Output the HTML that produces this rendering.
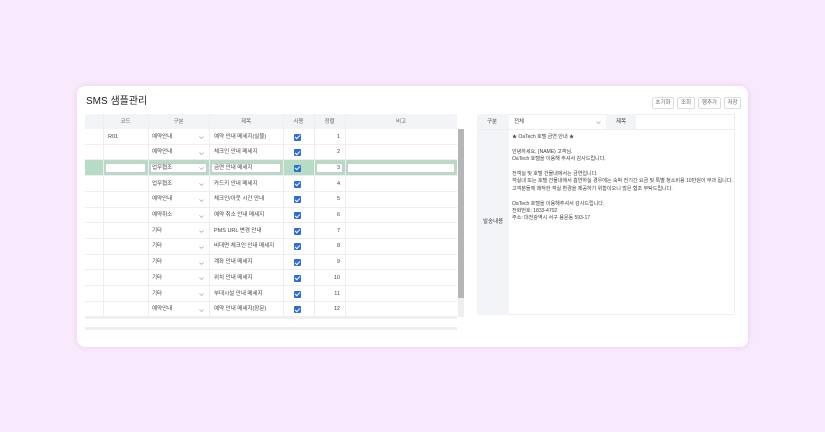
<!DOCTYPE html>
<html><head><meta charset="utf-8"><style>
*{box-sizing:border-box;margin:0;padding:0}
body{width:825px;height:432px;background:#f8eafc;font-family:"Liberation Sans","Noto Sans CJK KR",sans-serif;color:#333;position:relative;overflow:hidden}
.card{position:absolute;left:77px;top:86px;width:671px;height:261px;background:#fff;border-radius:8px;box-shadow:0 0 6px rgba(200,150,220,.35)}
.title{position:absolute;left:86px;top:96px;font-size:10px;line-height:12px;color:#222}
.btn{position:absolute;top:97px;height:12px;border:1px solid #ddd;border-radius:2px;font-size:5.5px;color:#666;line-height:10px;text-align:center;background:#fff}
.abs{position:absolute}
.t{font-size:5.5px;line-height:7px;color:#444;white-space:nowrap}
.hd{background:#f3f4f8}
.chk{position:absolute;width:7px;height:7px;background:#2b6fd6;border-radius:1px}
.chk:after{content:"";position:absolute;left:2px;top:0.5px;width:2px;height:4px;border:solid #fff;border-width:0 1px 1px 0;transform:rotate(45deg)}
.in{position:absolute;background:#fff;border:1px solid #ccc;border-radius:2px;height:10px}
.cv{position:absolute;width:5px;height:3px}
</style></head><body>
<div class="card"></div>
<div class="title">SMS 샘플관리</div>
<div class="btn" style="left:652px;width:22px">초기화</div>
<div class="btn" style="left:677px;width:18px">조회</div>
<div class="btn" style="left:698px;width:23px">행추가</div>
<div class="btn" style="left:724px;width:17px">저장</div>

<div id="grid"></div>
<div class="abs" style="left:458px;top:129px;width:6px;height:188px;background:#eee"></div>
<div class="abs" style="left:458px;top:129px;width:6px;height:169px;background:#b5b5b8"></div>
<div class="abs" style="left:85px;top:327px;width:372px;height:3px;background:#eee"></div>

<div class="abs" style="left:477px;top:114px;width:258px;height:201px;border:1px solid #eceef3"></div>
<div class="abs hd" style="left:477px;top:114px;width:32px;height:201px"></div>
<div class="abs hd" style="left:606px;top:114px;width:30px;height:15px"></div>
<div class="abs" style="left:477px;top:129px;width:258px;height:1px;background:#eceef3"></div>
<div class="abs t" style="left:487px;top:118.5px">구분</div>
<div class="abs t" style="left:514px;top:118.5px">전체</div>
<svg class="cv" style="left:596px;top:121px" viewBox="0 0 5 3"><path d="M0.5 0.5L2.5 2.5L4.5 0.5" fill="none" stroke="#999" stroke-width="0.6"/></svg>
<div class="abs t" style="left:616px;top:118.5px">제목</div>
<div class="abs t" style="left:483px;top:219px">발송내용</div>
<div class="abs t" style="left:512px;top:134px;line-height:7.4px;font-size:5.1px;letter-spacing:-0.05px">★ OaTech 호텔 금연 안내 ★<br><br>안녕하세요, {NAME} 고객님.<br>OaTech 호텔을 이용해 주셔서 감사드립니다.<br><br>전객실 및 호텔 건물내에서는 금연입니다.<br>객실내 또는 호텔 건물내에서 흡연하실 경우에는 숙박 전기간 요금 및 특별 청소비용 10만원이 부과 됩니다.<br>고객분들께 쾌적한 객실 환경을 제공하기 위함이오니 많은 협조 부탁드립니다.<br><br>OaTech 호텔을 이용해주셔서 감사드립니다.<br>전화번호: 1833-4702<br>주소: 대전광역시 서구 용문동 593-17</div>

<script>
var g=document.getElementById('grid'),h='';
var cols=[85,103,148,209,283,314,345,457];
var names=['','코드','구분','제목','사용','정렬','비고'];
h+='<div class="abs hd" style="left:85px;top:114px;width:372px;height:15px"></div>';
for(var i=0;i<7;i++)h+='<div class="abs t" style="left:'+cols[i]+'px;width:'+(cols[i+1]-cols[i])+'px;top:118.5px;text-align:center;color:#666">'+names[i]+'</div>';
var rows=[['R01','예약안내','예약 안내 메세지(실물)'],['','예약안내','체크인 안내 메세지'],['','업무협조','금연 안내 메세지'],['','업무협조','카드키 안내 메세지'],['','예약안내','체크인/아웃 시간 안내'],['','예약취소','예약 취소 안내 메세지'],['','기타','PMS URL 변경 안내'],['','기타','비대면 체크인 안내 메세지'],['','기타','계좌 안내 메세지'],['','기타','위치 안내 메세지'],['','기타','부대시설 안내 메세지'],['','예약안내','예약 안내 메세지(장문)']];
var rh=15.7;
for(var r=0;r<12;r++){
 var y=129+r*rh;
 if(r==2)h+='<div class="abs" style="left:85px;top:'+y+'px;width:372px;height:'+rh+'px;background:#b6dcc6"></div>';
 h+='<div class="abs" style="left:85px;top:'+(y+rh-1)+'px;width:372px;height:1px;background:#eceef3"></div>';
 var cy=y+4.5;
 if(r==2){
  h+='<div class="in" style="left:105px;top:'+(y+3)+'px;width:41px"></div><div class="in" style="left:150px;top:'+(y+3)+'px;width:57px"></div><div class="in" style="left:211px;top:'+(y+3)+'px;width:70px"></div><div class="in" style="left:316px;top:'+(y+3)+'px;width:27px"></div><div class="in" style="left:347px;top:'+(y+3)+'px;width:108px"></div>';
 }
 h+='<div class="abs t" style="left:108px;top:'+cy+'px">'+rows[r][0]+'</div>';
 h+='<div class="abs t" style="left:152px;top:'+cy+'px">'+rows[r][1]+'</div>';
 h+='<svg class="cv" style="left:199px;top:'+(y+7)+'px" viewBox="0 0 5 3"><path d="M0.5 0.5L2.5 2.5L4.5 0.5" fill="none" stroke="#999" stroke-width="0.6"/></svg>';
 h+='<div class="abs t" style="left:214px;top:'+cy+'px">'+rows[r][2]+'</div>';
 h+='<div class="chk" style="left:294px;top:'+(y+4.5)+'px"></div>';
 h+='<div class="abs t" style="left:314px;width:26px;text-align:right;top:'+cy+'px">'+(r+1)+'</div>';
}
h+='<div class="abs" style="left:85px;top:317px;width:372px;height:2px;background:#f0f0f2"></div>';
for(var i=1;i<7;i++)h+='<div class="abs" style="left:'+cols[i]+'px;top:114px;width:1px;height:204px;background:#eceef3"></div>';
g.innerHTML=h;
</script>
</body></html>
